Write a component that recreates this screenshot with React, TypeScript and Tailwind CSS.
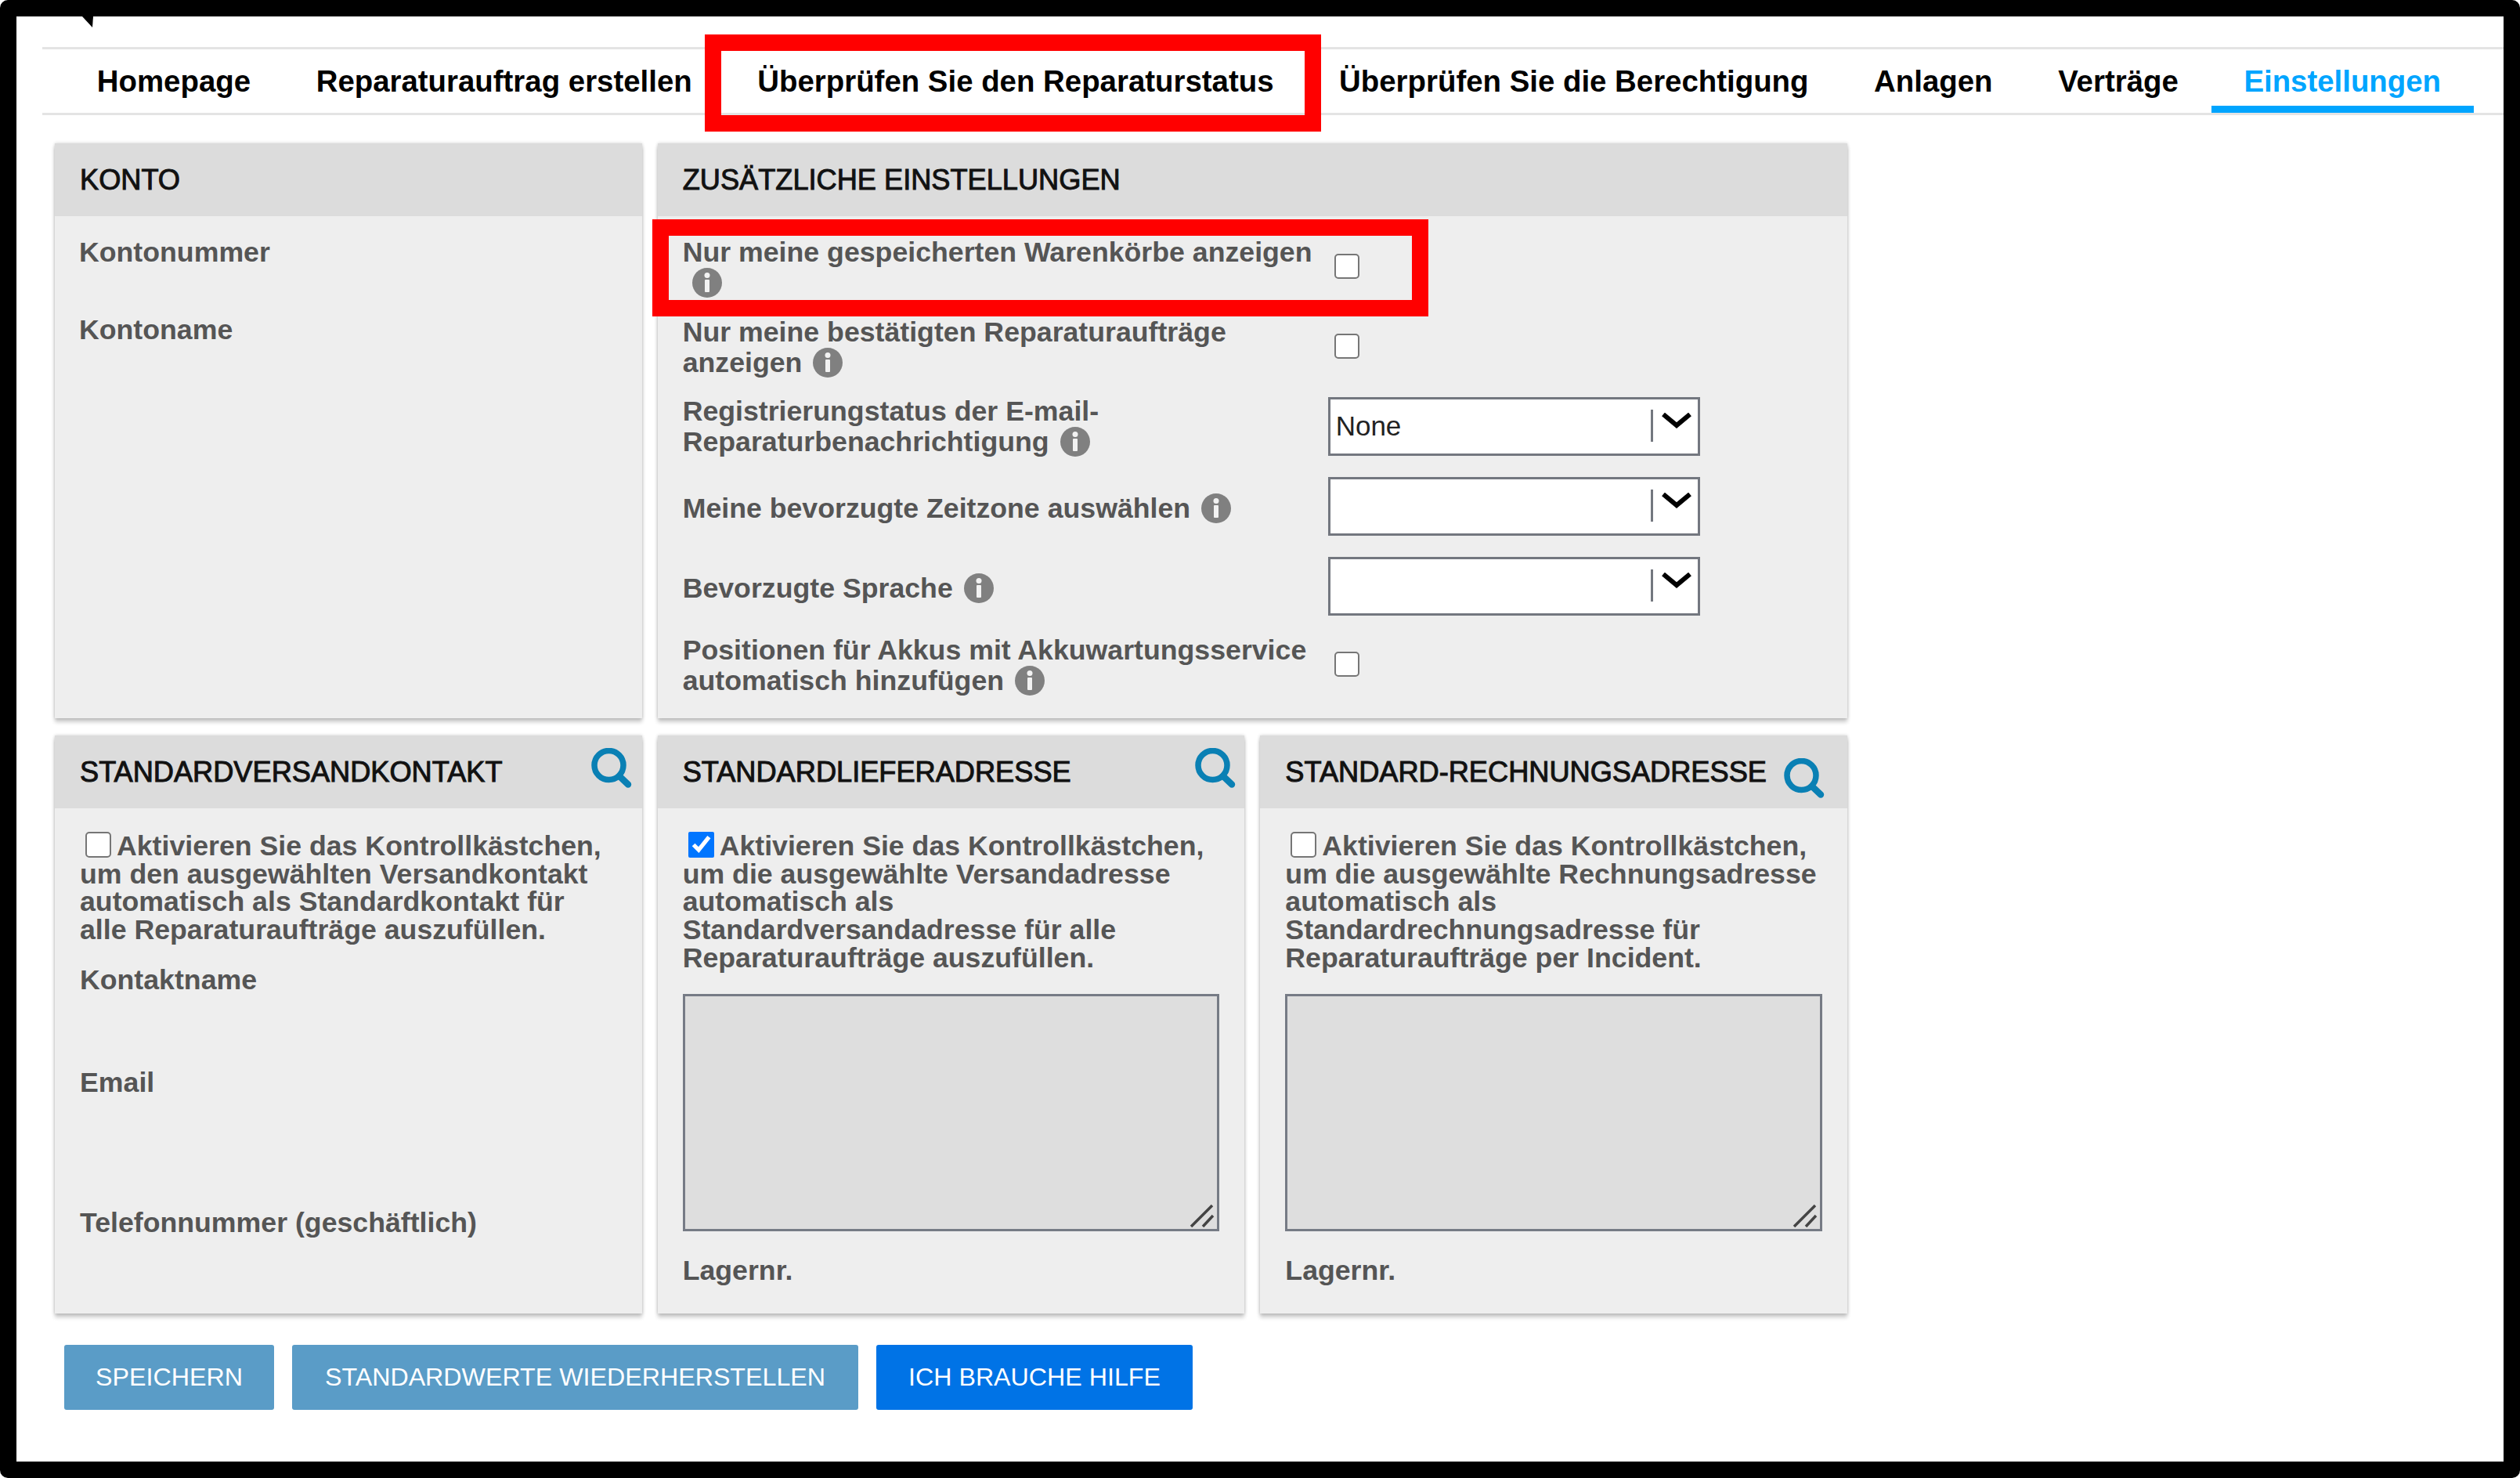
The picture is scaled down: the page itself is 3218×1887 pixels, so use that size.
import type { ReactNode } from "react";

const FONT = "font-['Liberation_Sans',Arial,sans-serif]";

const tabs = [
  "Homepage",
  "Reparaturauftrag erstellen",
  "Überprüfen Sie den Reparaturstatus",
  "Überprüfen Sie die Berechtigung",
  "Anlagen",
  "Verträge",
  "Einstellungen",
];

const InfoIcon = ({ wrapped }: { wrapped?: boolean }) => (
  <svg
    viewBox="0 0 38 38"
    className={`inline-block w-[38px] h-[38px] align-[-7px] ${wrapped ? "ml-[12px]" : "ml-[4px]"}`}
  >
    <circle cx="19" cy="19" r="19" fill="#808080" />
    <circle cx="19" cy="9.5" r="3.5" fill="#f2f2f2" />
    <rect x="16" y="15" width="6" height="16" rx="1" fill="#f2f2f2" />
  </svg>
);

const SearchIcon = () => (
  <svg viewBox="0 0 52 51" className="w-[52px] h-[51px]" fill="none" stroke="#0a80b4">
    <circle cx="22.5" cy="22" r="18.5" strokeWidth="7.5" />
    <path d="M36 36 L47 46.5" strokeWidth="8.5" strokeLinecap="round" />
  </svg>
);

const Chevron = () => (
  <svg viewBox="0 0 38 20" className="w-[38px] h-[20px]" fill="none" stroke="#000" strokeWidth="6">
    <path d="M2 2 L19 16 L36 2" />
  </svg>
);

const Check = ({ checked }: { checked?: boolean }) =>
  checked ? (
    <input
      type="checkbox"
      defaultChecked
      className="inline-block w-[33px] h-[33px] m-0 ml-[7px] mr-[7px] align-[-3px]"
    />
  ) : (
    <input
      type="checkbox"
      className="inline-block appearance-none bg-white border-[2.5px] border-[#767676] rounded-[5px] w-[33px] h-[33px] m-0 ml-[7px] mr-[7px] align-[-3px]"
    />
  );

const Select = ({ value }: { value?: string }) => (
  <div className="w-[475px] h-[75px] bg-white border-[3px] border-[#73777f] flex items-center text-[35px] text-[#222] pl-[7px] pr-[8px]">
    <span className="flex-1 font-normal">{value}</span>
    <span className="w-[3px] h-[41px] bg-[#73777f] mr-[11px] mb-[1px]" />
    <span className="mb-[15px]">
      <Chevron />
    </span>
  </div>
);

const Card = ({
  title,
  icon,
  iconTop = "mt-[16px]",
  iconRight = "mr-[13px]",
  className = "",
  children,
}: {
  title: string;
  icon?: boolean;
  iconTop?: string;
  iconRight?: string;
  className?: string;
  children: ReactNode;
}) => (
  <section
    className={`bg-[#eeeeee] shadow-[0_0_4px_rgba(0,0,0,0.2),0_5px_5px_rgba(0,0,0,0.2)] flex flex-col ${className}`}
  >
    <header className="h-[93px] bg-[#dcdcdc] flex justify-between pl-[32px]">
      <h2 className="self-center pt-[2px] text-[36.2px] text-[#111] font-normal [-webkit-text-stroke:1px_#111]">
        {title}
      </h2>
      {icon && (
        <span className={`${iconTop} ${iconRight}`}>
          <SearchIcon />
        </span>
      )}
    </header>
    {children}
  </section>
);

const Label = ({ children, className = "" }: { children: ReactNode; className?: string }) => (
  <p className={`text-[35.7px] leading-[39px] font-bold text-[#555] ${className}`}>{children}</p>
);

const Row = ({
  h,
  label,
  control,
  labelTop = "pt-[3px]",
}: {
  h: string;
  label: ReactNode;
  control: ReactNode;
  labelTop?: string;
}) => (
  <div className={`flex items-center ${h}`}>
    <div className={`w-[824px] pr-[6px] ${labelTop}`}>
      <Label>{label}</Label>
    </div>
    {control}
  </div>
);

const RowCheck = () => (
  <input
    type="checkbox"
    className="appearance-none bg-white border-[2.5px] border-[#767676] rounded-[5px] w-[32px] h-[32px] m-0 ml-[8px]"
  />
);

const Intro = ({ checked, children }: { checked?: boolean; children: ReactNode }) => (
  <p className="text-[35.7px] leading-[35.7px] font-bold text-[#555] pt-[1px]">
    <Check checked={checked} />
    {children}
  </p>
);

const AddressBox = () => (
  <div className="relative h-[303px] mt-[27px] bg-[#dedede] border-[3px] border-[#767b85]">
    <svg
      viewBox="0 0 32 30"
      className="absolute right-[3px] bottom-[2px] w-[32px] h-[30px]"
      stroke="#444"
      strokeWidth="3.5"
    >
      <path d="M2 29 L29 2 M17 29 L30 15" />
    </svg>
  </div>
);

const Buttons = () => (
  <div className="flex gap-[23px] mt-[40px] ml-[61px] text-[32.2px] text-white">
    <button className="w-[268px] h-[83px] rounded-[3px] bg-[#5a9cc7]">SPEICHERN</button>
    <button className="w-[723px] h-[83px] rounded-[3px] bg-[#5a9cc7]">STANDARDWERTE WIEDERHERSTELLEN</button>
    <button className="w-[404px] h-[83px] rounded-[3px] bg-[#0073e6]">ICH BRAUCHE HILFE</button>
  </div>
);

export default function App() {
  return (
    <div className={`relative w-[3218px] h-[1887px] box-border bg-white border-[21px] border-black rounded-[10px] overflow-hidden ${FONT}`}>
      {/* annotation marks on top of the page */}
      <svg viewBox="0 0 14 14" className="absolute left-[84px] top-0 w-[14px] h-[14px]">
        <path d="M0 0 H14 L13 14 Z" fill="#000" />
      </svg>
      <div className="absolute left-[879px] top-[23px] w-[787px] h-[124px] border-[21px] border-[#ff0000]" />
      <div className="absolute left-[812px] top-[259px] w-[991px] h-[124px] border-[21px] border-[#ff0000]" />

      <nav className="mt-[39px] ml-[33px] h-[87px] border-y-[3px] border-[#e4e4e4] flex pl-[28px]">
        {tabs.map((t) => (
          <a
            key={t}
            className={`flex items-center px-[41.8px] pt-[9px] border-b-[9px] text-[38.4px] font-bold ${
              t === "Einstellungen" ? "text-[#00a5ff] border-[#00a5ff]" : "text-black border-transparent"
            }`}
          >
            {t}
          </a>
        ))}
      </nav>

      <main className="mt-[36px] ml-[49px] w-[2289px] grid grid-cols-3 gap-x-[20px] gap-y-[22px] grid-rows-[734px_738px]">
        <Card title="KONTO">
          <div className="pt-[27px] pl-[31px]">
            <Label>Kontonummer</Label>
            <Label className="mt-[60px]">Kontoname</Label>
          </div>
        </Card>

        <Card title="ZUSÄTZLICHE EINSTELLUNGEN" className="col-span-2">
          <div className="pt-[13px] pl-[32px]">
            <Row
              h="h-[102px]"
              label={
                <>
                  Nur meine gespeicherten Warenkörbe anzeigen <InfoIcon wrapped />
                </>
              }
              control={<RowCheck />}
            />
            <Row
              h="h-[102px]"
              label={
                <>
                  Nur meine bestätigten Reparaturaufträge anzeigen <InfoIcon />
                </>
              }
              control={<RowCheck />}
            />
            <Row
              h="h-[102px]"
              labelTop="pt-[2px]"
              label={
                <>
                  Registrierungstatus der E-mail-Reparaturbenachrichtigung <InfoIcon />
                </>
              }
              control={<Select value="None" />}
            />
            <Row
              h="h-[102px]"
              labelTop="pt-[6px]"
              label={
                <>
                  Meine bevorzugte Zeitzone auswählen <InfoIcon />
                </>
              }
              control={<Select />}
            />
            <Row
              h="h-[102px]"
              labelTop="pt-[6px]"
              label={
                <>
                  Bevorzugte Sprache <InfoIcon />
                </>
              }
              control={<Select />}
            />
            <Row
              h="h-[98px]"
              label={
                <>
                  Positionen für Akkus mit Akkuwartungsservice automatisch hinzufügen <InfoIcon />
                </>
              }
              control={<RowCheck />}
            />
          </div>
        </Card>

        <Card title="STANDARDVERSANDKONTAKT" icon>
          <div className="pt-[29px] pl-[32px] pr-[44px]">
            <Intro>
              Aktivieren Sie das Kontrollkästchen, um den ausgewählten Versandkontakt automatisch als
              Standardkontakt für alle Reparaturaufträge auszufüllen.
            </Intro>
            <Label className="mt-[26px]">Kontaktname</Label>
            <Label className="mt-[92px]">Email</Label>
            <Label className="mt-[140px]">Telefonnummer (geschäftlich)</Label>
          </div>
        </Card>

        <Card title="STANDARDLIEFERADRESSE" icon iconRight="mr-[11px]">
          <div className="pt-[29px] px-[32px]">
            <Intro checked>
              Aktivieren Sie das Kontrollkästchen, um die ausgewählte Versandadresse automatisch als
              Standardversandadresse für alle Reparaturaufträge auszufüllen.
            </Intro>
            <AddressBox />
            <Label className="mt-[31px]">Lagernr.</Label>
          </div>
        </Card>

        <Card title="STANDARD-RECHNUNGSADRESSE" icon iconTop="mt-[29px]" iconRight="mr-[29px]">
          <div className="pt-[29px] px-[32px]">
            <Intro>
              Aktivieren Sie das Kontrollkästchen, um die ausgewählte Rechnungsadresse automatisch als
              Standardrechnungsadresse für Reparaturaufträge per Incident.
            </Intro>
            <AddressBox />
            <Label className="mt-[31px]">Lagernr.</Label>
          </div>
        </Card>
      </main>

      <Buttons />
    </div>
  );
}
